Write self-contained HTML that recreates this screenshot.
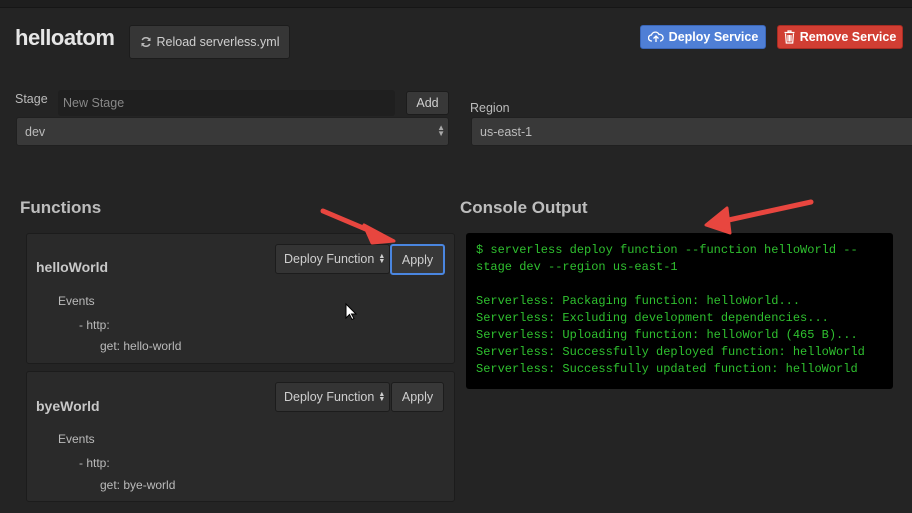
<!DOCTYPE html>
<html><head><meta charset="utf-8"><style>
*{box-sizing:border-box;margin:0;padding:0}
body{width:912px;height:513px;background:#242424;font-family:"Liberation Sans",sans-serif;color:#c8c8c8;position:relative;overflow:hidden;font-size:12px}
.a{position:absolute}
.topbar{left:0;top:0;width:912px;height:8px;background:#1e1e1e;border-bottom:1px solid #161616}
.btn{position:absolute;background:#383838;border:1px solid #1c1c1c;border-radius:3px;color:#cfcfcf;font-size:12px;display:flex;align-items:center;justify-content:center}
.sel{position:absolute;background:#393939;border:1px solid #202020;border-radius:3px;color:#bbb;font-size:12.5px;padding-left:8px;display:flex;align-items:center}
.card{position:absolute;left:26px;width:429px;height:131px;background:#2a2a2a;border:1px solid #1c1c1c;border-radius:3px}
.h2{font-size:17px;font-weight:bold;color:#bdbdbd}
.cn{font-size:14px;font-weight:bold;color:#c8c8c8}
.ev{font-size:12px;color:#bbb}
.con{left:466px;top:233px;width:427px;height:156px;background:#000;border-radius:3px;padding:9px 10px;font-family:"Liberation Mono",monospace;font-size:12px;line-height:17px;color:#2fc02f;white-space:pre}
</style></head><body>
<div class="a topbar"></div>
<div class="a" style="left:15px;top:25px;font-size:22px;font-weight:bold;color:#e6e6e6;letter-spacing:-0.5px">helloatom</div>
<div class="btn" style="left:129px;top:25px;width:161px;height:34px;background:#363636;font-size:12.5px"><svg width="12" height="12" viewBox="0 0 12 12" style="margin-right:5px"><path d="M10 4.5A4.3 4.3 0 0 0 2.2 4M2 7.5a4.3 4.3 0 0 0 7.8.5" fill="none" stroke="#bbb" stroke-width="1.5"/><path d="M10.5 1.5v3.5h-3.5zM1.5 10.5V7h3.5z" fill="#bbb"/></svg>Reload serverless.yml</div>
<div class="btn" style="left:640px;top:25px;width:126px;height:24px;background:#4f7fd6;border-color:#3a66b8;color:#fff;font-weight:bold;font-size:12.5px"><svg width="16" height="12" viewBox="0 0 16 12" style="margin-right:5px"><path d="M4 10H3.5a3 3 0 0 1 0-6 4 4 0 0 1 7.5-.5A3.2 3.2 0 0 1 12.5 10H12" fill="none" stroke="#fff" stroke-width="1.3"/><path d="M8 11V5M5.5 7.5L8 5l2.5 2.5" fill="none" stroke="#fff" stroke-width="1.3"/></svg>Deploy Service</div>
<div class="btn" style="left:777px;top:25px;width:126px;height:24px;background:#d13e33;border-color:#a82b22;color:#fff;font-weight:bold;font-size:12.5px"><svg width="11" height="14" viewBox="0 0 11 14" style="margin-right:5px"><path d="M0.5 2.5h10M4 2.5V1h3v1.5M1.5 3.5l.8 9.5h6.4l.8-9.5M4 5v6.5M5.5 5v6.5M7 5v6.5" fill="none" stroke="#fff" stroke-width="1.2"/></svg>Remove Service</div>
<div class="a" style="left:15px;top:92px;font-size:12.5px;color:#bbb">Stage</div>
<div class="a" style="left:58px;top:90px;width:337px;height:26px;background:#1f1f1f;border-radius:3px;color:#888;font-size:12.5px;padding:6px 5px">New Stage</div>
<div class="btn" style="left:406px;top:91px;width:43px;height:24px;font-size:12.5px">Add</div>
<div class="sel" style="left:16px;top:117px;width:433px;height:29px">dev<span style="position:absolute;right:3px;top:7px;font-size:8px;line-height:6px;color:#aaa">▲<br>▼</span></div>
<div class="a" style="left:470px;top:101px;font-size:12.5px;color:#bbb">Region</div>
<div class="sel" style="left:471px;top:117px;width:450px;height:29px">us-east-1</div>
<div class="a h2" style="left:20px;top:198px">Functions</div>
<div class="a h2" style="left:460px;top:198px">Console Output</div>
<div class="card" style="top:233px">
 <div class="a cn" style="left:9px;top:25px">helloWorld</div>
 <div class="btn" style="left:248px;top:10px;width:115px;height:30px;background:#343434;font-size:12.5px;justify-content:flex-start;padding-left:8px">Deploy Function <span style="font-size:7px;line-height:5px;margin-left:4px">▲<br>▼</span></div>
 <div class="btn" style="left:363px;top:10px;width:55px;height:31px;border:2px solid #4a86e0;font-size:12.5px">Apply</div>
 <div class="a ev" style="left:31px;top:60px">Events</div>
 <div class="a ev" style="left:52px;top:84px">- http:</div>
 <div class="a ev" style="left:73px;top:105px">get: hello-world</div>
</div>
<div class="card" style="top:371px">
 <div class="a cn" style="left:9px;top:26px">byeWorld</div>
 <div class="btn" style="left:248px;top:10px;width:115px;height:30px;background:#343434;font-size:12.5px;justify-content:flex-start;padding-left:8px">Deploy Function <span style="font-size:7px;line-height:5px;margin-left:4px">▲<br>▼</span></div>
 <div class="btn" style="left:364px;top:10px;width:53px;height:30px;font-size:12.5px">Apply</div>
 <div class="a ev" style="left:31px;top:60px">Events</div>
 <div class="a ev" style="left:52px;top:84px">- http:</div>
 <div class="a ev" style="left:73px;top:106px">get: bye-world</div>
</div>
<div class="a con">$ serverless deploy function --function helloWorld --
stage dev --region us-east-1

Serverless: Packaging function: helloWorld...
Serverless: Excluding development dependencies...
Serverless: Uploading function: helloWorld (465 B)...
Serverless: Successfully deployed function: helloWorld
Serverless: Successfully updated function: helloWorld</div>
<svg class="a" style="left:0;top:0" width="912" height="513">
 <path d="M323 211L375 233" stroke="#e8463f" stroke-width="5" stroke-linecap="round"/>
 <path d="M394 241L364 225L372 243Z" fill="#e8463f" stroke="#e8463f" stroke-width="3" stroke-linejoin="round"/>
 <path d="M811 202L724 221" stroke="#e8463f" stroke-width="5" stroke-linecap="round"/>
 <path d="M706 225L727 208L730 233Z" fill="#e8463f" stroke="#e8463f" stroke-width="3" stroke-linejoin="round"/>
 <path d="M346 304v14l3.5-3.5 2.5 5 2-1-2.5-4.5h4.5z" fill="#fff" stroke="#000" stroke-width="1"/>
</svg>
</body></html>
